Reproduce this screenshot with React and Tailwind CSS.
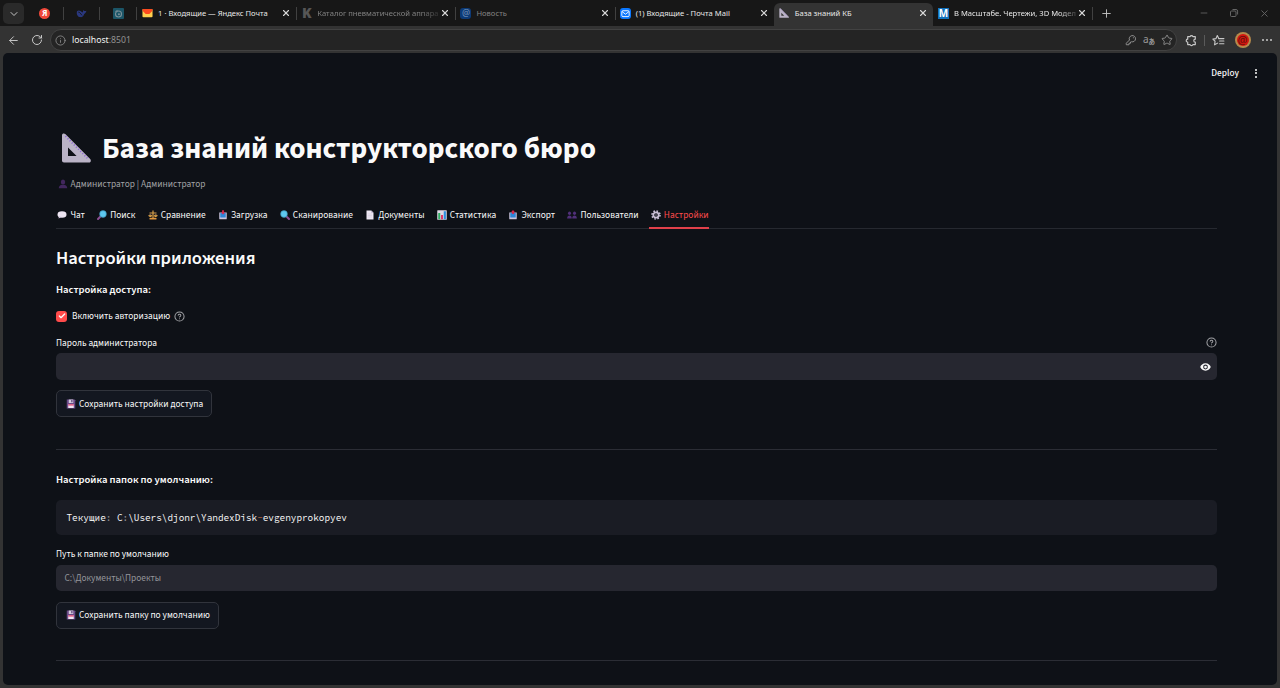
import { ArrowLeft, RotateCw, Info, Star, ChevronDown, Plus, X, CircleHelp, Minus, Check } from 'lucide-react'

// ---------- browser chrome ----------

const YandexMailIcon = () => (
  <svg viewBox="0 0 12 10" className="w-[12px] h-[10px]">
    <rect x="0.5" y="0.5" width="11" height="9" rx="1" fill="#ffcf4d" />
    <path d="M0.5 1.5 a1 1 0 0 1 1 -1 H10.5 a1 1 0 0 1 1 1 V2.6 L8 6.2 H4 L0.5 2.6 Z" fill="#fc4a1f" />
  </svg>
)

const MailRuIcon = () => (
  <svg viewBox="0 0 12 12" className="w-[11px] h-[11px]">
    <rect width="12" height="12" rx="3.2" fill="#0a77ff" />
    <rect x="2" y="3" width="8" height="6.4" rx="1.2" fill="none" stroke="#fff" strokeWidth="1" />
    <path d="M2.4 4 L6 6.8 L9.6 4" fill="none" stroke="#fff" strokeWidth="1" />
  </svg>
)

const NewsIcon = () => (
  <span className="flex w-[11px] h-[11px] items-center justify-center rounded-[3px] bg-[#0b3a77] text-[9px] leading-none text-[#7390b5] pb-px">@</span>
)

const KIcon = () => (
  <span className="font-black text-[14px] leading-none text-[#565656]">K</span>
)

const MIcon = () => (
  <span className="flex w-[11px] h-[11px] items-center justify-center bg-[#1272bd] font-bold text-[10px] leading-none text-white">M</span>
)

const RulerIcon = ({ className }) => (
  <svg viewBox="0 0 30 30" className={className}>
    <path fillRule="evenodd" fill="#bab3c6" d="M1 2.2 C1 0.4 3 -0.2 4.3 1 L29.2 26 C30.4 27.4 29.8 29.5 28 29.5 H3 C1.8 29.5 1 28.7 1 27.5 Z M7 14.6 V23 H15.6 Z" />
    <path d="M4.5 3.2 L27.5 26.4" stroke="#8d65d8" strokeWidth="1.7" strokeDasharray="1 2" fill="none" />
  </svg>
)

const WhaleIcon = () => (
  <svg viewBox="0 0 24 20" className="w-[11px] h-[9px]">
    <path d="M2 5 C5 2 10 3 14 8 C16 6 15 3 17 2 C18 5 20 5 23 4 C22 8 20 10 18 11 C17 16 13 19 9 18 C4 18 0 12 2 5 Z" fill="#2a387e" />
    <path d="M5 7 C8 7 10 10 13 14" stroke="#171717" strokeWidth="2" fill="none" />
  </svg>
)

const TealIcon = () => (
  <svg viewBox="0 0 12 12" className="w-[11px] h-[11px]">
    <rect width="12" height="12" rx="1" fill="#1b5567" />
    <circle cx="6" cy="6.5" r="3.3" fill="none" stroke="#7b8f97" strokeWidth="1.2" />
    <circle cx="6.5" cy="6.7" r="1.1" fill="#7b8f97" />
    <path d="M2.5 3.8 L5 2.6" stroke="#7b8f97" strokeWidth="1" />
  </svg>
)

const PINNED = [
  <span className="flex w-[11px] h-[11px] items-center justify-center rounded-full bg-[#f0483a] font-bold text-[8px] leading-none text-white">Я</span>,
  <WhaleIcon />,
  <TealIcon />,
]

const TABS = [
  { title: '1 · Входящие — Яндекс Почта', icon: <YandexMailIcon />, text: 'text-[#e8e8e8]', gap: 'gap-[5px]' },
  { title: 'Каталог пневматической аппара', icon: <KIcon />, text: 'text-[#828282]', gap: 'gap-[5px]', fade: true },
  { title: 'Новость', icon: <NewsIcon />, text: 'text-[#828282]', gap: 'gap-[5px]' },
  { title: '(1) Входящие - Почта Mail', icon: <MailRuIcon />, text: 'text-[#e8e8e8]', gap: 'gap-[5px]' },
  { title: 'База знаний КБ', icon: <RulerIcon className="w-[10px] h-[10px]" />, text: 'text-[#e8e8e8]', gap: 'gap-[5px]', active: true },
  { title: 'В Масштабе. Чертежи, 3D Модел', icon: <MIcon />, text: 'text-[#e8e8e8]', gap: 'gap-[5px]', fade: true },
]

function BrowserTab({ tab, divider }) {
  return (
    <div
      className={
        'relative flex h-full w-[159.2px] shrink-0 items-center pl-[5px] pr-[5px] ' +
        (tab.active ? 'rounded-t-[6px] bg-[#333333] pb-[3px]' : '')
      }
    >
      {divider && <span className="absolute left-0 top-[4px] h-[13px] w-px bg-[#414141]" />}
      <div className={'flex min-w-0 flex-1 items-center ' + tab.gap}>
        <span className="flex w-[11px] shrink-0 justify-center">{tab.icon}</span>
        <span
          className={
            'whitespace-nowrap text-[7.6px] leading-[14px] ' + tab.text +
            (tab.fade ? ' tracking-[0.02px] [mask-image:linear-gradient(to_right,black_86%,transparent_104%)]' : '')
          }
        >
          {tab.title}
        </span>
      </div>
      <X size={10} strokeWidth={2.6} className="shrink-0 text-[#d8d8d8]" />
    </div>
  )
}

function TabStrip() {
  return (
    <div className="flex h-[26px] items-end bg-[#171717]">
      <div className="mb-[2px] ml-[3px] flex h-[21px] w-[21px] shrink-0 items-center justify-center rounded-[5px] bg-[#2a2a2a]">
        <ChevronDown size={12} strokeWidth={2} className="text-[#c4c4c4]" />
      </div>
      <div className="ml-[3px] flex h-[23px] flex-1">
        {PINNED.map((icon, i) => (
          <div key={i} className="relative flex w-[36.7px] items-center justify-center pb-[3px] pr-px">
            {icon}
            <span className="absolute right-0 top-[4px] h-[13px] w-px bg-[#414141]" />
          </div>
        ))}
        <div className="flex">
          {TABS.map((tab, i) => (
            <div key={tab.title} className={tab.active ? 'flex' : 'flex pb-[3px]'}>
              <BrowserTab tab={tab} divider={i > 0 && i < 4} />
            </div>
          ))}
        </div>
        <div className="relative flex h-[20px] items-center pl-[8px]">
          <span className="absolute left-0 top-[4px] h-[13px] w-px bg-[#414141]" />
          <Plus size={13} strokeWidth={1.7} className="text-[#c4c4c4]" />
        </div>
        <div className="ml-auto flex h-[20px] items-center gap-[20px] pr-[10px] text-[#666666]">
          <Minus size={10} strokeWidth={2} />
          <svg viewBox="0 0 10 10" className="h-[10px] w-[10px]" fill="none" stroke="currentColor">
            <rect x="1.5" y="3" width="5.5" height="5.5" rx="1" />
            <path d="M3.5 1.5 H7 a1.6 1.6 0 0 1 1.6 1.6 V6.5" />
          </svg>
          <X size={11} strokeWidth={2} />
        </div>
      </div>
    </div>
  )
}

const FavoritesIcon = () => (
  <svg viewBox="0 0 24 24" className="h-[13px] w-[13px]" fill="none" stroke="currentColor" strokeWidth="2" strokeLinecap="round" strokeLinejoin="round">
    <path d="M12.5 8.5 L9.8 2.8 L7.2 8.6 L1.6 9.4 L5.7 13.4 L4.7 20 L10.5 16.8" />
    <path d="M12.5 8.5 H22 M14 13 H22 M14 18 H22" />
  </svg>
)

const ExtensionsIcon = () => (
  <svg viewBox="0 0 24 24" className="h-[13px] w-[13px]" fill="none" stroke="currentColor" strokeWidth="2.2" strokeLinejoin="round">
    <path d="M7 5 H9.5 A2.6 2.6 0 0 1 14.5 5 H19 V9.5 A2.7 2.7 0 0 0 19 15 V19.5 H14.5 A2.6 2.6 0 0 1 9.5 19.5 H5 V15 A2.7 2.7 0 0 1 5 9.5 V5 Z" />
  </svg>
)

const KeyIcon = () => (
  <svg viewBox="0 0 24 24" className="h-[12px] w-[12px]" fill="none" stroke="currentColor" strokeWidth="1.9" strokeLinejoin="round">
    <path d="M9 12 A6.3 6.3 0 1 1 13 15.5 L11 16 V18.5 H8 V21.5 H2.5 V18.5 Z" />
    <circle cx="16.8" cy="7.5" r="1.2" fill="currentColor" stroke="none" />
  </svg>
)

const TranslateIcon = () => (
  <span className="flex text-[#9a9a9a] leading-none">
    <span className="-mt-[2px] text-[10px]">a</span>
    <span className="mt-[2px] font-['Noto_Sans_CJK_JP',sans-serif] text-[6.5px] font-bold">あ</span>
  </span>
)

function Toolbar() {
  return (
    <div className="flex h-[27px] items-center bg-[#333333] pt-px text-[#c8c8c8]">
      <ArrowLeft size={13} strokeWidth={1.8} className="ml-[7px]" />
      <RotateCw size={12} strokeWidth={2} className="ml-[11px]" />
      <div className="ml-[7px] flex h-[22px] w-[1127px] items-center rounded-full border border-[#424242] bg-[#242424] pl-[4px] pr-[3px]">
        <Info size={11} strokeWidth={1.7} className="text-[#969696]" />
        <span className="ml-[6px] text-[8.7px] leading-none text-[#929292]">
          <span className="text-[#f2f2f2]">localhost</span>:8501
        </span>
        <div className="ml-auto flex items-center gap-[6px] text-[#949494]">
          <KeyIcon />
          <TranslateIcon />
          <Star size={12} strokeWidth={1.8} />
        </div>
      </div>
      <span className="ml-[8px]"><ExtensionsIcon /></span>
      <span className="ml-[6px] h-[11px] w-px bg-[#5a5a5a]" />
      <span className="ml-[7px]"><FavoritesIcon /></span>
      <span className="ml-[9.5px] flex h-[16px] w-[16px] items-center justify-center rounded-full bg-[#b58a4c]">
        <span className="flex h-[12px] w-[12px] items-center justify-center rounded-full bg-[#d3150f] pb-[1.5px] text-[11px] leading-none text-[#5e130c]">@</span>
      </span>
      <span className="ml-[11px] flex gap-[2px]">
        <i className="size-[2px] rounded-full bg-[#c8c8c8]" />
        <i className="size-[2px] rounded-full bg-[#c8c8c8]" />
        <i className="size-[2px] rounded-full bg-[#c8c8c8]" />
      </span>
    </div>
  )
}

// ---------- emoji ----------

const Emoji = ({ children }) => (
  <svg viewBox="0 0 20 20" className="h-[10px] w-[10px] shrink-0">{children}</svg>
)

const ChatEmoji = () => (
  <Emoji>
    <ellipse cx="10" cy="9" rx="9" ry="6.5" fill="#eee6f3" />
    <path d="M4 12 L3 17 L9 14 Z" fill="#d9cde3" />
  </Emoji>
)

const SearchEmoji = ({ flip }) => (
  <Emoji>
    <g transform={flip ? 'translate(20 0) scale(-1 1)' : undefined}>
      <path d="M12 12 L18 18" stroke="#8b4f93" strokeWidth="4" strokeLinecap="round" />
      <circle cx="8" cy="8" r="6.8" fill="#5ec8f0" stroke="#3587a8" strokeWidth="1.2" />
    </g>
  </Emoji>
)

const ScalesEmoji = () => (
  <Emoji>
    <path d="M10 1 V16 M3 6 H17" stroke="#d8a04a" strokeWidth="2.4" />
    <path d="M4.5 6 L1.5 11 H8 Z M15.5 6 L12 11 H18.5 Z" fill="#6e5a4c" />
    <path d="M0.5 10.5 H8.5 C8 15 1.5 15 0.5 10.5 Z M11.5 10.5 H19.5 C18.5 15 12 15 11.5 10.5 Z" fill="#f0b04a" />
    <rect x="3" y="15.5" width="14" height="3.5" rx="1" fill="#e0963c" />
  </Emoji>
)

const TrayEmoji = ({ up }) => (
  <Emoji>
    <path d="M2.5 5 H17.5 V17.5 a1 1 0 0 1 -1 1 H3.5 a1 1 0 0 1 -1 -1 Z" fill="#c9c3dc" />
    <rect x="4.5" y="6" width="11" height="9" rx="1" fill="#2f86d8" />
    {up
      ? <path d="M10 0 L14 4.5 H11.8 V8 H8.2 V4.5 H6 Z" fill="#d9254d" />
      : <path d="M10 9 L14 5 H11.8 V0.5 H8.2 V5 H6 Z" fill="#d9254d" />}
  </Emoji>
)

const PageEmoji = () => (
  <Emoji>
    <path d="M3 1 H12.5 L17 5.5 V19 H3 Z" fill="#eee8f3" />
    <path d="M12.5 1 V5.5 H17 Z" fill="#b9aecb" />
    <path d="M5.5 8 H14 M5.5 11 H14 M5.5 14 H14" stroke="#cfc6da" strokeWidth="1" />
  </Emoji>
)

const ChartEmoji = () => (
  <Emoji>
    <rect x="0.5" y="0.5" width="19" height="19" rx="1" fill="#ded8e6" />
    <rect x="2.5" y="6" width="4" height="12.5" fill="#2fae62" />
    <rect x="8" y="10" width="4" height="8.5" fill="#e0396a" />
    <rect x="13.5" y="2.5" width="4.3" height="16" fill="#2f8fe0" />
  </Emoji>
)

const UserEmoji = () => (
  <Emoji>
    <ellipse cx="10" cy="6" rx="4.4" ry="5" fill="#42275e" />
    <path d="M1.5 18.5 C1.5 13.5 5 12 8 11.5 H12 C15 12 18.5 13.5 18.5 18.5 Z" fill="#42275e" />
  </Emoji>
)

const UsersEmoji = () => (
  <Emoji>
    <g fill="#51307a">
      <ellipse cx="5" cy="6.5" rx="3" ry="3.6" />
      <ellipse cx="15" cy="6.5" rx="3" ry="3.6" />
      <path d="M0.3 17 C0.3 12.5 2.5 11 5 11 C7.5 11 9.6 12.5 9.6 17 Z M10.4 17 C10.4 12.5 12.5 11 15 11 C17.5 11 19.7 12.5 19.7 17 Z" />
    </g>
  </Emoji>
)

const GearEmoji = () => (
  <Emoji>
    <circle cx="10" cy="10" r="8" fill="none" stroke="#c9c0d6" strokeWidth="3.2" strokeDasharray="3.2 3.08" />
    <circle cx="10" cy="10" r="5.4" fill="none" stroke="#c9c0d6" strokeWidth="3.6" />
    <circle cx="10" cy="10" r="1.6" fill="#8a8298" />
  </Emoji>
)

const FloppyEmoji = () => (
  <Emoji>
    <path d="M1.5 1 H17 L18.5 2.5 V19 H1.5 Z" fill="#6a4a88" />
    <rect x="5.5" y="1" width="9" height="7" fill="#d5cde0" />
    <rect x="10.5" y="2" width="2.5" height="4.5" fill="#5d4078" />
    <rect x="4.5" y="10.5" width="11" height="7.5" fill="#efe6f4" />
    <rect x="4.5" y="10.5" width="11" height="2.6" fill="#e0456e" />
  </Emoji>
)

// ---------- app ----------

const NAV = [
  { label: 'Чат', icon: <ChatEmoji /> },
  { label: 'Поиск', icon: <SearchEmoji flip /> },
  { label: 'Сравнение', icon: <ScalesEmoji /> },
  { label: 'Загрузка', icon: <TrayEmoji /> },
  { label: 'Сканирование', icon: <SearchEmoji /> },
  { label: 'Документы', icon: <PageEmoji /> },
  { label: 'Статистика', icon: <ChartEmoji /> },
  { label: 'Экспорт', icon: <TrayEmoji up /> },
  { label: 'Пользователи', icon: <UsersEmoji /> },
  { label: 'Настройки', icon: <GearEmoji />, active: true },
]

function SaveButton({ children }) {
  return (
    <button className="flex h-[27px] w-fit items-center gap-[3px] rounded-[5px] border border-[#31343c] bg-[#131720] pl-[9px] pr-[8px] text-[#fafafa]">
      <FloppyEmoji />
      <span className="tracking-[0.01px]">{children}</span>
    </button>
  )
}

function Page() {
  return (
    <div className="h-[632px] overflow-hidden rounded-[5px] bg-[#0e1117] font-['Source_Sans_3','Source_Sans_Pro','Noto_Sans',sans-serif] text-[9.35px] leading-[16px] text-[#fafafa]">
      <header className="flex h-[40px] items-center justify-end pr-[20px]">
        <span className="font-medium">Deploy</span>
        <span className="ml-[16px] flex flex-col gap-[1.5px]">
          <i className="size-[2px] rounded-full bg-[#fafafa]" />
          <i className="size-[2px] rounded-full bg-[#fafafa]" />
          <i className="size-[2px] rounded-full bg-[#fafafa]" />
        </span>
      </header>

      <main className="flex flex-col pl-[53px] pr-[60px]">
        <h1 className="mt-[33px] flex h-[44px] items-center text-[29.33px] font-bold leading-[44px]">
          <RulerIcon className="ml-[5px] mr-[11px] h-[30px] w-[30px]" />
          <span className="pt-[2px]">База знаний конструкторского бюро</span>
        </h1>

        <p className="mt-[6px] flex h-[16px] items-center gap-[3px] pl-[1.5px] text-[#a1a2a5]">
          <UserEmoji />
          Администратор | Администратор
        </p>

        <nav className="mt-[10px] flex h-[27px] gap-[10.95px] border-b border-[#262930]">
          {NAV.map((t) => (
            <a
              key={t.label}
              className={
                'flex h-[27px] items-center gap-[3.2px] whitespace-nowrap pl-[1.2px] ' +
                (t.active ? 'border-b-2 border-[#e0404a] text-[#ff4b4b]' : 'pb-[2px]')
              }
            >
              {t.icon}
              {t.label}
            </a>
          ))}
        </nav>

        <h2 className="mt-[16px] h-[26px] text-[18.5px] font-semibold leading-[26px]">Настройки приложения</h2>
        <p className="mt-[11px] text-[10.67px] font-semibold">Настройка доступа:</p>

        <label className="mt-[10px] flex h-[16px] items-center">
          <span className="flex size-[11px] items-center justify-center rounded-[3px] bg-[#ff4b4b]">
            <Check size={8} strokeWidth={4} />
          </span>
          <span className="ml-[5px]">Включить авторизацию</span>
          <CircleHelp size={11} strokeWidth={2.2} className="ml-[4px] text-[#a0a1a5]" />
        </label>

        <div className="mt-[10px] flex h-[16px] items-center justify-between">
          <span className="pt-px">Пароль администратора</span>
          <CircleHelp size={11} strokeWidth={2.2} className="text-[#a0a1a5]" />
        </div>
        <div className="mt-[3px] flex h-[27px] items-center justify-end rounded-[5px] bg-[#262730] pr-[6px]">
          <svg viewBox="0 0 24 16" className="h-[8px] w-[11px]">
            <path fillRule="evenodd" fill="#fafafa" d="M12 0 C6 0 2 4 0.5 8 C2 12 6 16 12 16 C18 16 22 12 23.5 8 C22 4 18 0 12 0 Z M12 2.8 A5.2 5.2 0 1 1 12 13.2 A5.2 5.2 0 1 1 12 2.8 Z" />
            <circle cx="12" cy="8" r="3" fill="#fafafa" />
          </svg>
        </div>
        <div className="mt-[10px]">
          <SaveButton>Сохранить настройки доступа</SaveButton>
        </div>

        <hr className="mt-[32px] border-t border-[#2b2d35]" />

        <p className="mt-[22px] text-[10.67px] font-semibold">Настройка папок по умолчанию:</p>
        <pre className="mt-[12px] flex h-[35px] items-center rounded-[5px] bg-[#1a1c24] pl-[10.5px] font-['Source_Code_Pro','DejaVu_Sans_Mono',monospace] text-[9.35px]">
          <code className="font-[inherit]">
            Текущие<span className="text-[#8b8d93]">:</span> C<span className="text-[#8b8d93]">:</span>\Users\djonr\YandexDisk<span className="text-[#c46a3c]">-</span>evgenyprokopyev
          </code>
        </pre>

        <p className="mt-[11px]">Путь к папке по умолчанию</p>
        <div className="mt-[3px] flex h-[26px] items-center rounded-[5px] bg-[#262730] pl-[8.5px] text-[#94959a]">
          С:\Документы\Проекты
        </div>
        <div className="mt-[10.5px]">
          <SaveButton>Сохранить папку по умолчанию</SaveButton>
        </div>

        <hr className="mt-[31.5px] border-t border-[#2b2d35]" />
      </main>
    </div>
  )
}

export default function App() {
  return (
    <div className="h-[688px] w-[1280px] overflow-hidden bg-[#333333] font-['Noto_Sans','Open_Sans',sans-serif]">
      <TabStrip />
      <Toolbar />
      <div className="px-[3px]">
        <Page />
      </div>
    </div>
  )
}
